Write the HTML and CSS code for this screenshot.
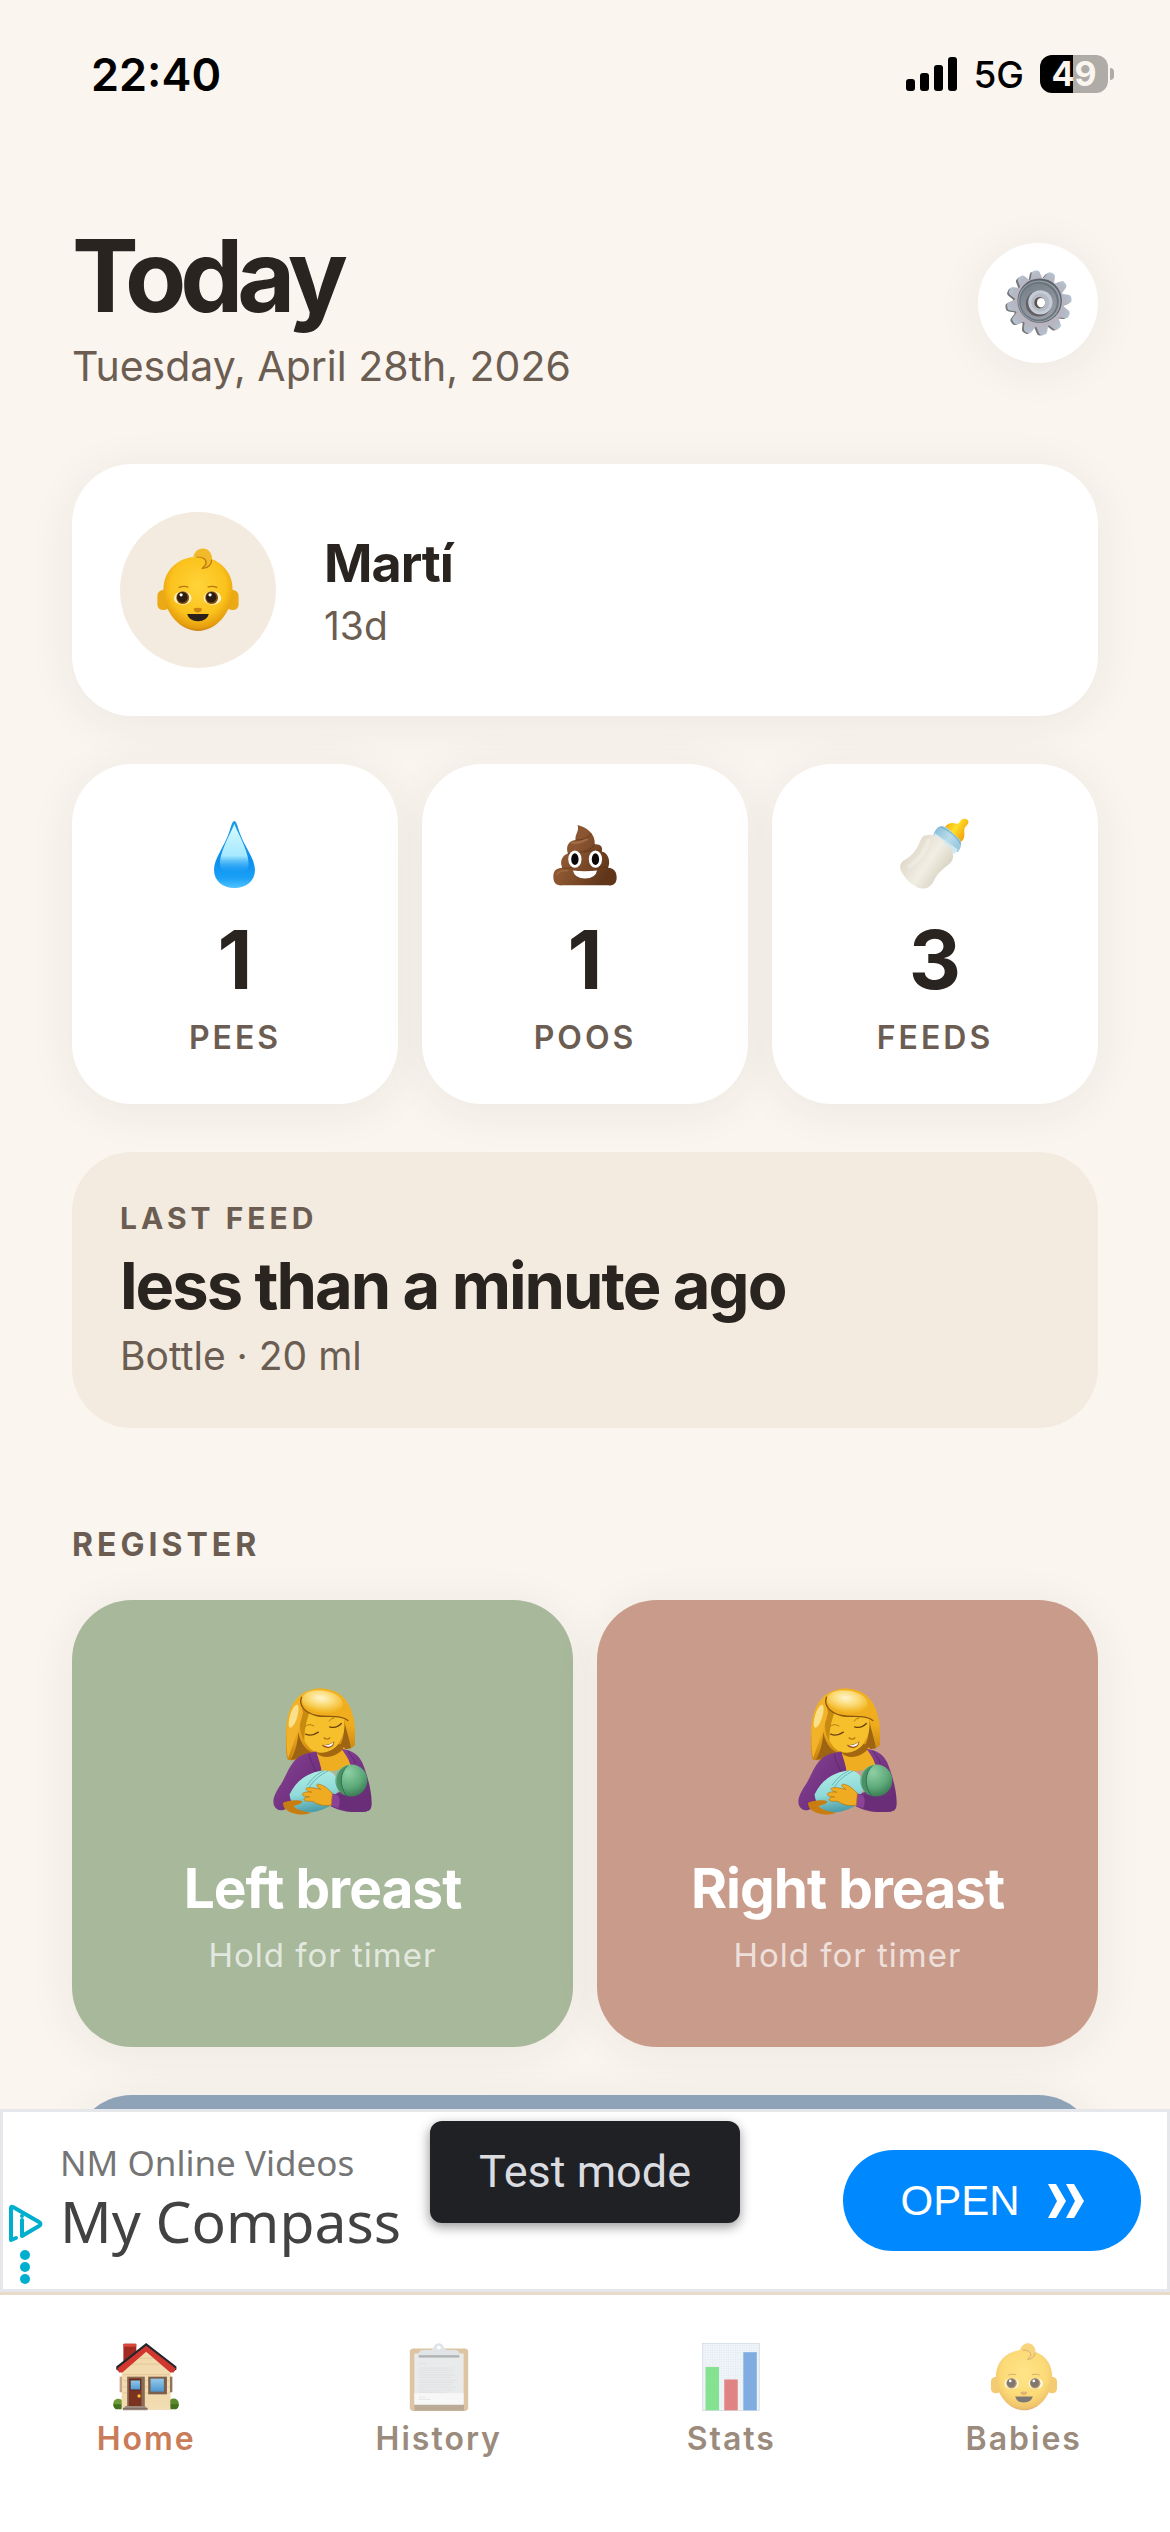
FILE: index.html
```html
<!DOCTYPE html>
<html lang="en">
<head>
<meta charset="utf-8">
<meta name="viewport" content="width=device-width, initial-scale=1">
<title>Today</title>
<link rel="stylesheet" href="styles.css">
</head>
<body>
<svg class="sprite" aria-hidden="true">
  <defs>
    <radialGradient id="skin" cx=".5" cy=".4" r=".62"><stop offset="0" stop-color="#ffd43a"/><stop offset=".65" stop-color="#fbc21c"/><stop offset=".9" stop-color="#e59d0d"/><stop offset="1" stop-color="#b9731a"/></radialGradient>
    <linearGradient id="steel" x1="0" y1="0" x2=".3" y2="1"><stop offset="0" stop-color="#b9c8d6"/><stop offset=".5" stop-color="#b3bac6"/><stop offset="1" stop-color="#b9b4bf"/></linearGradient>
    <linearGradient id="dish" x1="0" y1="0" x2=".4" y2="1"><stop offset="0" stop-color="#747d86"/><stop offset="1" stop-color="#969ca5"/></linearGradient>
    <linearGradient id="water" x1="0" y1="0" x2="0" y2="1"><stop offset="0" stop-color="#1a9be8"/><stop offset=".6" stop-color="#0c8ff0"/><stop offset=".85" stop-color="#1aa0f5"/><stop offset="1" stop-color="#4fc3ff"/></linearGradient>
    <linearGradient id="waterlight" x1="0" y1="0" x2="0" y2="1"><stop offset="0" stop-color="#d8fbff"/><stop offset=".65" stop-color="#a6e9ff"/><stop offset="1" stop-color="#2ba9f5" stop-opacity="0"/></linearGradient>
    <linearGradient id="brown" x1="0" y1="0" x2="1" y2=".5"><stop offset="0" stop-color="#8d5a34"/><stop offset=".45" stop-color="#8a5530"/><stop offset="1" stop-color="#60361a"/></linearGradient>
    <linearGradient id="milk" x1="0" y1="0" x2="1" y2=".7"><stop offset="0" stop-color="#bdb6a2"/><stop offset=".3" stop-color="#e2dccd"/><stop offset=".6" stop-color="#f1eee4"/><stop offset="1" stop-color="#cfcab8"/></linearGradient>
    <linearGradient id="teat" x1="0" y1="0" x2="1" y2=".6"><stop offset="0" stop-color="#f09a00"/><stop offset=".5" stop-color="#ffe02a"/><stop offset="1" stop-color="#f29a05"/></linearGradient>
    <linearGradient id="collar" x1="0" y1="0" x2="1" y2=".6"><stop offset="0" stop-color="#7fb6d4"/><stop offset=".6" stop-color="#b9dcea"/><stop offset="1" stop-color="#9cc9de"/></linearGradient>
    <linearGradient id="hair" x1="0" y1="0" x2=".1" y2="1"><stop offset="0" stop-color="#f4b51f"/><stop offset=".6" stop-color="#eeab1c"/><stop offset="1" stop-color="#c98210"/></linearGradient>
    <radialGradient id="shine" cx=".45" cy=".35" r=".6"><stop offset="0" stop-color="#fff6cf"/><stop offset=".5" stop-color="#fbdc7a"/><stop offset="1" stop-color="#f3b827"/></radialGradient>
    <linearGradient id="purple" x1="0" y1="0" x2="1" y2="1"><stop offset="0" stop-color="#8a4596"/><stop offset=".6" stop-color="#713280"/><stop offset="1" stop-color="#642a70"/></linearGradient>
    <linearGradient id="wrap" x1="0" y1="0" x2=".2" y2="1"><stop offset="0" stop-color="#b5efe6"/><stop offset=".6" stop-color="#8fdad9"/><stop offset="1" stop-color="#4f9fa9"/></linearGradient>
    <radialGradient id="cap" cx=".4" cy=".25" r=".8"><stop offset="0" stop-color="#8fd0a4"/><stop offset=".6" stop-color="#5ca979"/><stop offset="1" stop-color="#37764f"/></radialGradient>
    <linearGradient id="wall" x1="0" y1="0" x2=".3" y2="1"><stop offset="0" stop-color="#f0d9ac"/><stop offset="1" stop-color="#f2dcb2"/></linearGradient>
    <linearGradient id="glass" x1="0" y1="0" x2="0" y2="1"><stop offset="0" stop-color="#93c9ea"/><stop offset="1" stop-color="#4f97d0"/></linearGradient>
    <pattern id="grid" width="7" height="7" patternUnits="userSpaceOnUse"><path d="M0 0H7M0 0V7" stroke="#b9d3ea" stroke-width="2" fill="none"/></pattern>
    <path id="tooth" d="M-20-66 L-13-91 Q-11-99-4-99 H4 Q11-99 13-91 L20-66Z"/>
    <g id="cog">
      <circle r="76"/>
      <use href="#tooth" transform="rotate(-7)"/><use href="#tooth" transform="rotate(23)"/><use href="#tooth" transform="rotate(53)"/>
      <use href="#tooth" transform="rotate(83)"/><use href="#tooth" transform="rotate(113)"/><use href="#tooth" transform="rotate(143)"/>
      <use href="#tooth" transform="rotate(173)"/><use href="#tooth" transform="rotate(203)"/><use href="#tooth" transform="rotate(233)"/>
      <use href="#tooth" transform="rotate(263)"/><use href="#tooth" transform="rotate(293)"/><use href="#tooth" transform="rotate(323)"/>
    </g>
  </defs>

  <symbol id="i-gear" viewBox="131 149 202 202">
    <g fill="#77777a" transform="translate(230 252) scale(.96)"><use href="#cog"/></g>
    <g fill="url(#steel)" transform="translate(236 249) scale(.97)"><use href="#cog"/></g>
    <ellipse cx="237" cy="243" rx="66" ry="66" fill="#5b626b"/>
    <ellipse cx="236" cy="245" rx="63" ry="62" fill="#9aa2ab"/>
    <ellipse cx="235" cy="245" rx="59" ry="59" fill="#6c757e"/>
    <ellipse cx="234" cy="246" rx="54" ry="53" fill="url(#dish)"/>
    <circle cx="234" cy="252" r="38" fill="#625e62"/>
    <circle cx="239" cy="248" r="36" fill="#c6ccd6"/>
    <circle cx="239" cy="248" r="27" fill="#b4bac6"/>
    <ellipse cx="237" cy="249" rx="16" ry="17" fill="#5d544c"/>
    <ellipse cx="241" cy="249" rx="12" ry="14" fill="#fff"/>
  </symbol>

  <symbol id="i-baby" viewBox="1052 97 204 208">
    <rect x="1053" y="201" width="30" height="50" rx="14" fill="#eba916"/>
    <rect x="1225" y="201" width="30" height="50" rx="14" fill="#eba916"/>
    <path d="M1068 200 C1068 150 1106 118 1154 118 C1202 118 1240 150 1240 200 C1240 258 1198 303 1154 303 C1110 303 1068 258 1068 200Z" fill="url(#skin)"/>
    <path d="M1142 119 C1146 105 1155 98 1166 98 C1180 98 1189 110 1189 123 C1189 138 1180 147 1167 148 C1174 140 1176 128 1167 122 C1160 117 1150 118 1142 119Z" fill="#f2b92a"/>
    <path d="M1150 119 C1166 118 1176 124 1174 136 L1165 147 C1180 147 1188 137 1188 126" fill="none" stroke="#b9780f" stroke-width="3"/>
    <path d="M1106 195 Q1118 190 1130 194 M1178 194 Q1190 190 1202 195" fill="none" stroke="#b9780f" stroke-width="3"/>
    <ellipse cx="1116" cy="221" rx="22" ry="17" fill="#fff3c4"/><ellipse cx="1190" cy="221" rx="22" ry="17" fill="#fff3c4"/>
    <circle cx="1116" cy="220" r="16" fill="#8a5208"/><circle cx="1188" cy="220" r="16" fill="#8a5208"/>
    <circle cx="1115" cy="219" r="13" fill="#2b1d14"/><circle cx="1187" cy="219" r="13" fill="#2b1d14"/>
    <circle cx="1112" cy="213" r="4" fill="#fff"/><circle cx="1184" cy="213" r="4" fill="#fff"/>
    <path d="M1143 247 Q1153 243 1164 247 Q1163 257 1153 257 Q1144 257 1143 247Z" fill="#cc8413"/>
    <path d="M1127 261 H1181 Q1176 279 1154 279 Q1132 279 1127 261Z" fill="#2a1f1b"/>
  </symbol>

  <symbol id="i-drop" viewBox="0 0 123 201">
    <path d="M61 0 C66 0 70 12 76 32 C90 75 123 112 123 146 C123 180 96 201 61 201 C27 201 0 180 0 146 C0 112 32 75 46 32 C52 12 56 0 61 0Z" fill="url(#water)"/>
    <path d="M61 8 C68 30 104 88 104 128 C104 148 88 156 61 156 C34 156 18 148 18 128 C18 88 54 30 61 8Z" fill="url(#waterlight)"/>
  </symbol>

  <symbol id="i-poo" viewBox="157 78 191 184">
    <path d="M230 78 C255 84 284 102 282 136 C298 134 308 144 303 158 C324 162 330 190 322 207 C342 208 348 222 348 236 C348 254 338 262 320 260 H185 C166 262 157 252 157 234 C157 216 166 208 184 207 C176 190 182 170 201 164 C194 142 202 126 224 123 C222 104 236 98 230 78Z" fill="url(#brown)"/>
    <path d="M224 123 C244 124 262 118 272 104 M201 164 C240 164 276 152 282 136 M184 207 C200 210 210 208 222 202 M322 207 C308 206 300 204 290 210 M250 160 C276 156 290 150 303 158" fill="none" stroke="#57301a" stroke-width="3" opacity=".65"/>
    <path d="M214 132 Q236 134 258 122" stroke="#ae7a52" stroke-width="7" stroke-linecap="round" fill="none" opacity=".65"/>
    <path d="M168 226 Q178 214 200 216" stroke="#a97348" stroke-width="5" stroke-linecap="round" fill="none" opacity=".6"/>
    <ellipse cx="222" cy="181" rx="20" ry="26" fill="#fff"/><ellipse cx="284" cy="181" rx="20" ry="26" fill="#fff"/>
    <ellipse cx="222" cy="181" rx="11" ry="18" fill="#0c0706"/><ellipse cx="284" cy="181" rx="11" ry="18" fill="#0c0706"/>
    <path d="M216 215 Q252 220 289 215 Q284 239 253 239 Q221 239 216 215Z" fill="#fff"/>
  </symbol>

  <symbol id="i-bottle" viewBox="1198 58 208 212">
    <path d="M1334 84 C1340 72 1356 70 1368 74 C1380 76 1378 58 1392 59 C1406 60 1408 72 1398 80 C1386 90 1396 104 1390 118 C1386 127 1382 130 1378 129Z" fill="url(#teat)"/>
    <path d="M1310 88 C1316 80 1330 80 1342 88 L1378 122 C1386 132 1382 150 1372 160 L1298 112 C1300 102 1304 94 1310 88Z" fill="url(#collar)"/>
    <path d="M1320 84 C1346 94 1368 112 1381 136" stroke="#69a5c8" stroke-width="3" fill="none"/>
    <path d="M1298 112 L1304 103 L1372 152 L1362 166Z" fill="#cfe8f0"/>
    <path d="M1276 109 C1290 104 1308 110 1322 120 L1350 148 C1362 164 1360 184 1348 194 C1326 212 1312 222 1300 246 C1292 264 1276 274 1256 268 C1234 260 1212 238 1202 218 C1194 202 1200 190 1214 182 C1238 168 1250 150 1260 124 C1264 114 1270 110 1276 109Z" fill="url(#milk)"/>
    <path d="M1284 124 C1274 160 1254 184 1226 202" stroke="#fff" stroke-width="12" stroke-linecap="round" fill="none" opacity=".25"/>
  </symbol>

  <symbol id="i-nursing" viewBox="96 58 297 380">
    <path d="M238 59 C300 60 328 100 338 150 C344 180 342 205 342 228 C336 240 320 240 306 240 L200 262 C180 272 158 276 141 273 C134 260 134 230 135 200 C134 130 160 60 238 59Z" fill="url(#hair)"/>
    <path d="M172 190 C180 230 200 250 228 256 L150 273 C164 246 170 220 172 190Z" fill="#9c6413"/>
    <path d="M308 150 C318 190 326 216 330 238 L290 244 C306 220 312 190 308 150Z" fill="#9c6413"/>
    <path d="M226 248 L310 236 C322 260 336 280 336 296 L240 312Z" fill="#efad22"/>
    <path d="M226 252 C250 276 290 262 306 240 L300 226 H232Z" fill="#a3670f"/>
    <path d="M184 120 C172 170 182 212 206 238 C232 262 276 252 294 222 C310 196 314 172 308 146 Q240 110 184 120Z" fill="#f6c02c"/>
    <path d="M184 118 C172 160 174 190 190 216 C190 180 196 160 204 134Z" fill="#c98a12"/>
    <path d="M184 84 C170 104 188 128 222 138 C256 146 294 138 316 150 C330 158 336 175 338 190 C336 120 304 62 238 59 C214 60 196 68 184 84Z" fill="#f0ae1f"/>
    <ellipse cx="244" cy="98" rx="62" ry="33" fill="url(#shine)" transform="rotate(8 244 98)"/>
    <path d="M178 86 C152 110 140 150 138 200 C136 230 138 254 141 268 C154 230 172 190 186 130 C182 116 178 100 178 86Z" fill="#f2b32a"/>
    <ellipse cx="158" cy="142" rx="11" ry="36" fill="#fbe08c" transform="rotate(17 158 142)"/>
    <path d="M182 84 C172 108 190 132 226 140 C260 147 300 136 322 156" stroke="#8a570c" stroke-width="4" fill="none"/>
    <path d="M190 174 Q204 162 220 172 M264 158 Q270 148 280 147" stroke="#b67d10" stroke-width="3" fill="none"/>
    <path d="M194 196 Q212 204 232 190 M266 174 Q286 180 301 164" stroke="#6d4208" stroke-width="4" stroke-linecap="round" fill="none"/>
    <path d="M248 206 Q258 216 268 206" stroke="#ba7a0f" stroke-width="4" fill="none"/>
    <path d="M242 228 Q264 230 280 217 Q280 234 262 238 Q248 238 242 228Z" fill="#9b541c"/>
    <path d="M247 230 Q264 230 278 221 Q274 232 262 234Z" fill="#fff"/>
    <path d="M226 248 C232 270 240 290 242 310 L150 400 C140 428 108 432 99 410 C92 390 106 366 120 346 C142 310 150 272 186 258 C200 252 214 250 226 248Z" fill="url(#purple)"/>
    <path d="M302 240 C330 244 352 256 364 282 C382 326 392 370 392 402 C392 420 388 426 374 428 C340 432 300 430 270 412 L274 376 L330 360 L328 288 C322 266 310 254 302 240Z" fill="url(#purple)"/>
    <path d="M206 256 C204 276 222 290 226 318 M322 246 C326 262 344 270 342 286" stroke="#55235f" stroke-width="3" fill="none" opacity=".7"/>
    <path d="M146 376 C166 334 204 308 250 305 C280 306 294 330 292 362 L270 410 C240 428 200 438 174 426 C158 414 146 394 146 376Z" fill="url(#wrap)"/>
    <path d="M262 306 C238 318 216 334 204 358 M250 305 C226 316 210 332 198 350" stroke="#62b6b6" stroke-width="3" fill="none"/>
    <path d="M270 374 L330 382 C350 384 372 380 388 384 C392 400 392 424 376 428 C344 432 320 430 296 418 L270 412Z" fill="#6a2e78"/>
    <path d="M270 373 L292 380 Q300 398 292 418 L270 411Z" fill="#8a4396"/>
    <path d="M126 402 C140 394 170 392 184 397 C182 408 164 406 158 412 C170 426 190 426 208 432 C200 440 166 438 148 430 C132 424 126 414 126 402Z" fill="#c97c10"/>
    <path d="M274 374 C262 360 248 348 232 346 C224 346 226 354 240 362 C226 358 204 354 196 358 C192 362 200 368 212 370 C198 368 184 370 184 377 C184 382 196 384 206 384 C196 384 186 388 190 394 C196 400 208 396 216 398 C230 408 250 412 271 409Z" fill="#efac22" stroke="#b3720e" stroke-width="2"/>
    <circle cx="331" cy="335" r="48" fill="url(#cap)"/>
    <path d="M318 290 C288 300 280 336 296 368 Q304 378 314 380 C294 350 296 312 318 290Z" fill="#4a9168"/>
    <path d="M320 290 C296 312 294 350 316 380" stroke="#2f6f4a" stroke-width="3" fill="none"/>
  </symbol>

  <symbol id="i-home" viewBox="163 103 193 200">
    <rect x="193" y="105" width="38" height="60" rx="3" fill="#a32a22"/><rect x="193" y="105" width="38" height="9" rx="3" fill="#d8473a"/>
    <path d="M188 180 L260 122 L332 180 V299 H188Z" fill="url(#wall)"/>
    <path d="M192 196H330M192 214H330M192 232H330M192 250H330M192 268H330M192 284H330M215 165H305M235 148H285" stroke="#dfc08c" stroke-width="2"/>
    <path d="M172 172 L260 103 L349 172 V181 L340 187 L260 124 L181 187 L172 181Z" fill="#23262b"/>
    <path d="M175 178 L260 111 L347 178 L341 190 H331 L260 129 L190 190 H180Z" fill="#d2372f"/>
    <rect x="182" y="202" width="7" height="46" fill="#c5a48a"/><rect x="330" y="202" width="7" height="46" fill="#8e735f"/>
    <circle cx="178" cy="282" r="15" fill="#6f9a35"/><circle cx="341" cy="281" r="15" fill="#5c8a2b"/>
    <path d="M163 283H188V298H170Q163 294 163 283ZM331 283H356Q356 294 348 298H331Z" fill="#44701f"/>
    <rect x="188" y="260" width="143" height="39" fill="url(#wall)"/>
    <rect x="204" y="202" width="52" height="88" fill="#8c6b54"/><rect x="209" y="207" width="37" height="83" fill="#7a3320"/>
    <rect x="213" y="212" width="30" height="29" fill="url(#glass)" stroke="#4d1d12" stroke-width="2"/>
    <circle cx="239" cy="259" r="5" fill="#f4c435"/>
    <rect x="266" y="202" width="55" height="52" fill="#7b5f4c"/><rect x="273" y="208" width="39" height="38" fill="url(#glass)"/>
    <path d="M198 288H258V293H264V301H192V293H198Z" fill="#9a8a7e"/><path d="M192 296H264" stroke="#6c5d53" stroke-width="2"/>
  </symbol>

  <symbol id="i-clipboard" viewBox="1050 98 177 206">
    <rect x="1050" y="115" width="177" height="189" rx="11" fill="#c8a067"/>
    <rect x="1064" y="282" width="150" height="21" fill="#8f7250"/>
    <rect x="1064" y="130" width="149" height="155" fill="#dcdddf"/><rect x="1064" y="250" width="149" height="34" fill="#f2f2f3"/>
    <path d="M1078 160H1099M1078 174H1180M1078 181H1184M1078 188H1178M1078 195H1188M1078 202H1176M1078 210H1192M1078 217H1184M1078 225H1176M1078 232H1190M1078 240H1182M1078 247H1160M1078 262H1098M1078 269H1112" stroke="#c6c8ca" stroke-width="2"/>
    <path d="M1077 141 V128 Q1080 119 1092 119 H1114 C1124 118 1122 99 1138 99 C1154 99 1152 118 1162 119 H1186 Q1198 119 1200 128 V141Z" fill="#ccd3d8"/>
    <rect x="1077" y="135" width="123" height="7" fill="#7d7f80"/><circle cx="1138" cy="112" r="6" fill="#fff"/>
  </symbol>

  <symbol id="i-chart" viewBox="187 98 175 207">
    <rect x="187" y="98" width="175" height="207" fill="#e9eff3"/><rect x="187" y="98" width="175" height="207" fill="url(#grid)" opacity=".7"/>
    <rect x="188" y="99" width="173" height="205" fill="none" stroke="#b9c5cd" stroke-width="2"/>
    <rect x="197" y="171" width="41" height="132" fill="#33cf49"/><rect x="254" y="209" width="41" height="94" fill="#cd3233"/><rect x="312" y="126" width="41" height="177" fill="#2e76cf"/>
  </symbol>
</svg>

<div class="app">
  <div class="status">
    <span class="time">22:40</span>
    <div class="status-right">
      <svg class="signal" viewBox="0 0 51 34" aria-hidden="true"><rect y="22" width="9" height="12" rx="3"/><rect x="14" y="16" width="9" height="18" rx="3"/><rect x="28" y="8" width="9" height="26" rx="3"/><rect x="42" width="9" height="34" rx="3"/></svg>
      <span class="network">5G</span>
      <span class="battery">49</span>
    </div>
  </div>

  <main class="content">
    <header class="header">
      <div>
        <h1>Today</h1>
        <p class="date">Tuesday, April 28th, 2026</p>
      </div>
      <button class="settings" aria-label="Settings"><svg class="icon-gear"><use href="#i-gear"/></svg></button>
    </header>

    <section class="card baby">
      <div class="avatar"><svg class="icon-baby"><use href="#i-baby"/></svg></div>
      <div class="baby-text">
        <h2>Martí</h2>
        <p class="secondary">13d</p>
      </div>
    </section>

    <section class="stats">
      <div class="card stat"><svg class="icon-stat" viewBox="0 0 72 72"><use href="#i-drop" x="15" y="3" width="41" height="67"/></svg><strong>1</strong><span>PEES</span></div>
      <div class="card stat"><svg class="icon-stat" viewBox="0 0 72 72"><use href="#i-poo" x="4" y="7" width="64" height="61"/></svg><strong>1</strong><span>POOS</span></div>
      <div class="card stat"><svg class="icon-stat" viewBox="0 0 72 72"><use href="#i-bottle" x="1" y="0" width="69" height="71"/></svg><strong>3</strong><span>FEEDS</span></div>
    </section>

    <section class="last-feed">
      <h3>LAST FEED</h3>
      <p class="ago">less than a minute ago</p>
      <p class="secondary">Bottle · 20 ml</p>
    </section>

    <h3 class="section-title">REGISTER</h3>
    <section class="actions">
      <button class="action left"><svg class="icon-nursing"><use href="#i-nursing"/></svg><span class="action-name">Left breast</span><span class="hint">Hold for timer</span></button>
      <button class="action right"><svg class="icon-nursing"><use href="#i-nursing"/></svg><span class="action-name">Right breast</span><span class="hint">Hold for timer</span></button>
      <button class="action bottle" aria-label="Bottle"></button>
    </section>
  </main>

  <aside class="ad">
    <div class="ad-choices">
      <svg viewBox="0 0 36 80" aria-hidden="true"><path d="M8 34 L3 36 V4 Q3 2 5 3 L31 18 Q34 20 31 22 L14 32 V16" fill="none" stroke="#00aecd" stroke-width="4" stroke-linejoin="round" stroke-linecap="round"/><circle cx="14" cy="12" r="2" fill="#00aecd"/><g fill="#00aecd"><circle cx="17" cy="51" r="5"/><circle cx="17" cy="63" r="5"/><circle cx="17" cy="75" r="5"/></g></svg>
    </div>
    <div class="ad-text">
      <p class="ad-source">NM Online Videos</p>
      <p class="ad-title">My Compass</p>
    </div>
    <button class="ad-open">OPEN <svg viewBox="0 0 36 34" aria-hidden="true"><path d="M0 0H8L18 17L8 34H0L9 17ZM18 0H26L36 17L26 34H18L27 17Z" fill="#fff"/></svg></button>
    <span class="test-mode">Test mode</span>
  </aside>

  <nav class="tabs">
    <a href="#home" class="tab active"><svg><use href="#i-home"/></svg>Home</a>
    <a href="#history" class="tab"><svg><use href="#i-clipboard"/></svg>History</a>
    <a href="#stats" class="tab"><svg><use href="#i-chart"/></svg>Stats</a>
    <a href="#babies" class="tab"><svg><use href="#i-baby"/></svg>Babies</a>
  </nav>
</div>
</body>
</html>
```
FILE: styles.css
```css
* {
  box-sizing: border-box;
}

body {
  margin: 0;
  background: #faf5ef;
  color: #2a2420;
  font-family: Inter, "Liberation Sans", sans-serif;
}

h1, h2, h3, p {
  margin: 0;
}

button {
  border: 0;
  padding: 0;
  font: inherit;
  cursor: pointer;
}

.sprite {
  position: absolute;
  width: 0;
  height: 0;
}

.app {
  display: flex;
  flex-direction: column;
  height: 100vh;
}

/* Status bar */
.status {
  display: flex;
  flex: none;
  justify-content: space-between;
  align-items: center;
  height: 148px;
  padding: 0 56px 0 91px;
  color: #000;
}

.time {
  font-size: 45px;
  font-weight: 600;
}

.status-right {
  display: flex;
  align-items: center;
}

.signal {
  width: 51px;
  height: 34px;
}

.network {
  margin: 0 16px;
  font-size: 37px;
  font-weight: 500;
}

.battery {
  position: relative;
  width: 68px;
  height: 38px;
  margin-right: 6px;
  border-radius: 12px;
  background: linear-gradient(90deg, #000 48%, #afaca7 48%);
  color: #faf5ef;
  font-size: 34px;
  font-weight: 700;
  line-height: 38px;
  text-align: center;
}

.battery::after {
  content: "";
  position: absolute;
  top: 13px;
  left: 70px;
  width: 4px;
  height: 12px;
  border-radius: 0 4px 4px 0;
  background: #afaca7;
}

/* Scrolling content */
.content {
  flex: 1;
  min-height: 0;
  overflow: auto;
  scrollbar-width: none;
  padding: 68px 72px 0;
}

.header {
  display: flex;
  justify-content: space-between;
  align-items: center;
  margin-bottom: 68px;
}

h1 {
  font-size: 100px;
  font-weight: 700;
  line-height: 120px;
  letter-spacing: -6px;
}

.date {
  color: #6b5d52;
  font-size: 41px;
  line-height: 60px;
}

.settings {
  display: flex;
  justify-content: center;
  align-items: center;
  width: 120px;
  height: 120px;
  margin-bottom: 6px;
  border-radius: 50%;
  background: #fff;
  box-shadow: 0 6px 48px rgba(42, 36, 32, .07);
}

.icon-gear {
  width: 68px;
  height: 68px;
}

.card {
  border-radius: 60px;
  background: #fff;
  box-shadow: 0 6px 48px rgba(42, 36, 32, .07);
}

.baby {
  display: flex;
  align-items: center;
  gap: 48px;
  padding: 48px;
}

.avatar {
  display: flex;
  justify-content: center;
  align-items: center;
  width: 156px;
  height: 156px;
  border-radius: 50%;
  background: #f3ebe0;
}

.icon-baby {
  width: 82px;
  height: 84px;
}

h2 {
  margin-bottom: 4px;
  font-size: 52px;
  font-weight: 700;
  line-height: 68px;
  letter-spacing: -1px;
}

.secondary {
  color: #6b5d52;
  font-size: 39px;
  line-height: 48px;
}

.stats {
  display: grid;
  grid-template-columns: repeat(3, 1fr);
  gap: 24px;
  margin: 48px 0;
}

.stat {
  display: flex;
  flex-direction: column;
  align-items: center;
  padding: 54px 24px 48px;
}

.icon-stat {
  width: 72px;
  height: 72px;
}

.stat strong {
  margin: 22px 0 12px;
  font-size: 81px;
  font-weight: 700;
  line-height: 96px;
}

.stat span {
  color: #6b5d52;
  font-size: 32px;
  font-weight: 600;
  line-height: 36px;
  letter-spacing: 3px;
}

.last-feed {
  padding: 48px;
  border-radius: 60px;
  background: #f3ebe0;
  position: relative;
}

h3 {
  color: #6b5d52;
  font-size: 30px;
  font-weight: 700;
  line-height: 36px;
  letter-spacing: 4px;
}

.ago {
  margin-top: 4px;
  font-size: 65px;
  font-weight: 700;
  line-height: 92px;
  letter-spacing: -2px;
}

.section-title {
  margin: 99px 0 37px;
  font-size: 32px;
}

.actions {
  display: grid;
  grid-template-columns: repeat(2, 1fr);
  gap: 48px 24px;
}

.action {
  display: flex;
  flex-direction: column;
  align-items: center;
  padding: 88px 24px 74px;
  border-radius: 60px;
  box-shadow: 0 6px 48px rgba(42, 36, 32, .07);
  color: #fff;
}

.left {
  background: #a8b89b;
}

.right {
  background: #c99b8b;
}

.bottle {
  grid-column: 1 / -1;
  min-height: 240px;
  background: #8fa3b8;
}

.icon-nursing {
  width: 99px;
  height: 127px;
}

.action-name {
  margin: 37px 0 13px;
  font-size: 55px;
  font-weight: 700;
  line-height: 72px;
  letter-spacing: -1px;
}

.hint {
  color: rgba(255, 255, 255, .7);
  font-size: 33px;
  line-height: 36px;
  letter-spacing: 1px;
}

/* Banner */
.ad {
  position: relative;
  display: flex;
  flex: none;
  align-items: center;
  height: 183px;
  padding: 0 26px 0 5px;
  border: 3px solid #e5e7eb;
  background: #fff;
  font-family: "Noto Sans", "Open Sans", sans-serif;
}

.ad-choices {
  align-self: flex-end;
  width: 52px;
}

.ad-choices svg {
  display: block;
  width: 36px;
  height: 80px;
  margin-bottom: 5px;
}

.ad-text {
  flex: 1;
  padding-bottom: 8px;
}

.ad-source {
  color: #757575;
  font-size: 35px;
  line-height: 48px;
}

.ad-title {
  color: #424242;
  font-size: 57px;
  line-height: 68px;
}

.ad-open {
  display: flex;
  justify-content: center;
  align-items: center;
  gap: 28px;
  width: 298px;
  height: 101px;
  border-radius: 51px;
  background: #0088ff;
  color: #fff;
  font-family: "Liberation Sans", sans-serif;
  font-size: 42px;
}

.ad-open svg {
  width: 36px;
  height: 34px;
}

.test-mode {
  position: absolute;
  top: 9px;
  left: 50%;
  padding: 0 49px;
  border-radius: 12px;
  background: #202124;
  box-shadow: 0 4px 12px rgba(0, 0, 0, .4);
  color: #dadce0;
  font-family: Roboto, sans-serif;
  font-size: 45px;
  line-height: 102px;
  white-space: nowrap;
  transform: translateX(-50%);
}

/* Tab bar */
.tabs {
  display: grid;
  flex: none;
  grid-template-columns: repeat(4, 1fr);
  padding: 48px 0 74px;
  border-top: 3px solid #e8dcc8;
  background: #fff;
}

.tab {
  display: flex;
  flex-direction: column;
  align-items: center;
  gap: 9px;
  color: #9b8b7d;
  font-size: 32px;
  font-weight: 600;
  line-height: 38px;
  letter-spacing: 2px;
  text-decoration: none;
}

.tab svg {
  width: 68px;
  height: 68px;
  opacity: .6;
}

.active {
  color: #c97b5a;
}

.active svg {
  opacity: 1;
}
```
